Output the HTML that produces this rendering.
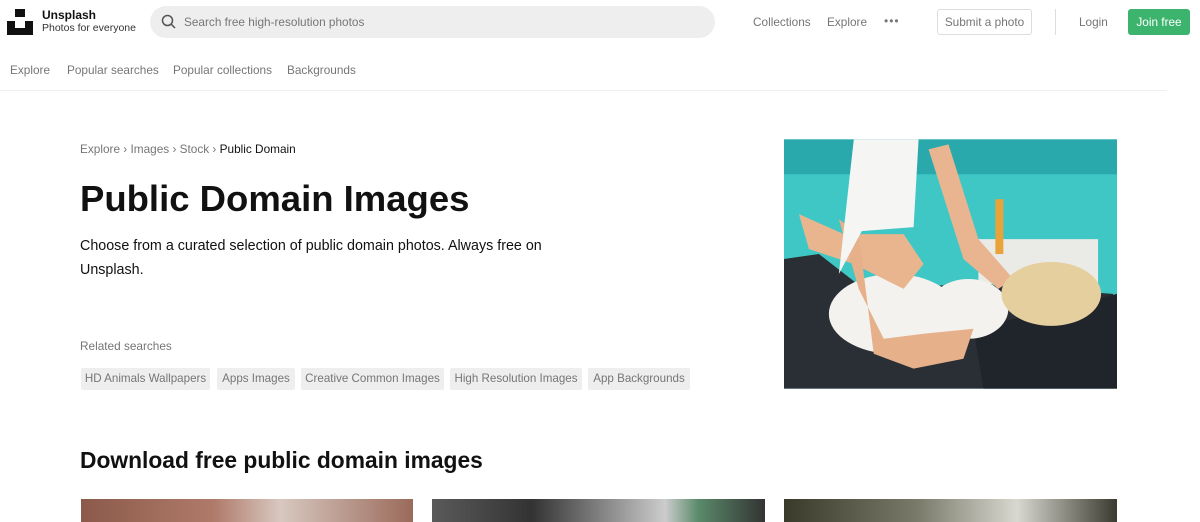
<!DOCTYPE html>
<html><head><meta charset="utf-8"><style>
*{margin:0;padding:0;box-sizing:border-box}
body{width:1200px;height:522px;overflow:hidden;background:#fff;font-family:"Liberation Sans",Arial,sans-serif;color:#111;position:relative}
.a{position:absolute;white-space:nowrap}
.g{color:#767676;font-size:11.8px}
.tag{position:absolute;top:368px;height:22px;background:#eee;color:#767676;font-size:11.6px;line-height:22px;text-align:center;border-radius:2px}
</style></head><body>
<svg class="a" style="left:7px;top:9px" width="26" height="26" viewBox="0 0 26 26"><rect x="8" y="0" width="10" height="8" fill="#111"/><rect x="0" y="12" width="8" height="14" fill="#111"/><rect x="8" y="19" width="10" height="7" fill="#111"/><rect x="18" y="12" width="8" height="14" fill="#111"/></svg>
<div class="a" style="left:42px;top:8px;font-size:12px;font-weight:bold">Unsplash</div>
<div class="a" style="left:42px;top:22px;font-size:10.5px;color:#333">Photos for everyone</div>
<div class="a" style="left:150px;top:6px;width:565px;height:32px;border-radius:16px;background:#eee"></div>
<svg class="a" style="left:161px;top:14px" width="16" height="16" viewBox="0 0 16 16"><circle cx="6.5" cy="6.5" r="5" fill="none" stroke="#555" stroke-width="1.5"/><line x1="10.2" y1="10.2" x2="14" y2="14" stroke="#555" stroke-width="1.5"/></svg>
<div class="a g" style="left:184px;top:15px">Search free high-resolution photos</div>
<div class="a g" style="left:753px;top:15px">Collections</div>
<div class="a g" style="left:827px;top:15px">Explore</div>
<div class="a" style="left:884px;top:14px;font-size:12px;color:#767676;letter-spacing:1px">•••</div>
<div class="a g" style="left:937px;top:9px;width:95px;height:26px;border:1px solid #ddd;border-radius:3px;line-height:24px;text-align:center">Submit a photo</div>
<div class="a" style="left:1055px;top:9px;width:1px;height:26px;background:#ddd"></div>
<div class="a g" style="left:1079px;top:15px">Login</div>
<div class="a" style="left:1128px;top:9px;width:62px;height:26px;background:#3cb46e;border-radius:3px;color:#fff;font-size:11.8px;line-height:26px;text-align:center">Join free</div>
<div class="a g" style="left:10px;top:63px">Explore</div>
<div class="a g" style="left:67px;top:63px">Popular searches</div>
<div class="a g" style="left:173px;top:63px">Popular collections</div>
<div class="a g" style="left:287px;top:63px">Backgrounds</div>
<div class="a" style="left:0;top:90px;width:1167px;height:1px;background:#eee"></div>
<div class="a" style="left:80px;top:142px;font-size:11.8px;color:#767676">Explore › Images › Stock › <span style="color:#111">Public Domain</span></div>
<div class="a" style="left:80px;top:178px;font-size:36.5px;font-weight:bold">Public Domain Images</div>
<div class="a" style="left:80px;top:234px;font-size:14.3px;line-height:24px;white-space:normal;width:475px">Choose from a curated selection of public domain photos. Always free on Unsplash.</div>
<div class="a g" style="left:80px;top:339px">Related searches</div>
<div class="tag" style="left:81px;width:129px">HD Animals Wallpapers</div>
<div class="tag" style="left:217px;width:78px">Apps Images</div>
<div class="tag" style="left:301px;width:143px">Creative Common Images</div>
<div class="tag" style="left:450px;width:132px">High Resolution Images</div>
<div class="tag" style="left:588px;width:102px">App Backgrounds</div>
<svg class="a" style="left:784px;top:139px" width="333" height="250" viewBox="0 0 334 250">
<rect width="334" height="250" fill="#3fc7c6"/>
<rect width="334" height="35" fill="#2aa9ad"/>
<polygon points="195,100 315,100 315,145 195,145" fill="#eaeae6"/>
<rect x="212" y="60" width="8" height="55" fill="#e8a43a"/>
<polygon points="0,120 35,115 80,150 190,145 330,155 334,250 0,250" fill="#2a2f35"/>
<polygon points="190,190 334,155 334,250 200,250" fill="#20252b"/>
<ellipse cx="110" cy="175" rx="65" ry="40" fill="#f4f2ef"/>
<ellipse cx="185" cy="170" rx="40" ry="30" fill="#f4f2ef"/>
<path d="M15,75 L60,95 L120,95 L140,125 L120,150 L70,125 L25,110 Z" fill="#e8b58e"/>
<path d="M55,80 L75,95 L90,215 L130,230 L180,220 L190,190 L140,195 L100,200 L75,150 Z" fill="#e6b08a"/>
<path d="M145,10 L165,5 L195,100 L230,140 L215,150 L180,120 Z" fill="#e8b590"/>
<ellipse cx="268" cy="155" rx="50" ry="32" fill="#e6cf9e"/>
<polygon points="70,0 135,0 130,88 78,92 55,135" fill="#f5f5f3"/>
</svg>
<div class="a" style="left:80px;top:447px;font-size:22.8px;font-weight:bold">Download free public domain images</div>
<div class="a" style="left:81px;top:499px;width:332px;height:23px;background:linear-gradient(90deg,#8b5a4a,#b07a6a 40%,#d8c8c0 60%,#9a6a5a)"></div>
<div class="a" style="left:432px;top:499px;width:333px;height:23px;background:linear-gradient(90deg,#5a5a5a,#333 30%,#ccc 70%,#5a8a6a 80%,#333)"></div>
<div class="a" style="left:784px;top:499px;width:333px;height:23px;background:linear-gradient(90deg,#3a3a2a,#7a7a6a 40%,#d8d8d0 70%,#3a3a30)"></div>
</body></html>
